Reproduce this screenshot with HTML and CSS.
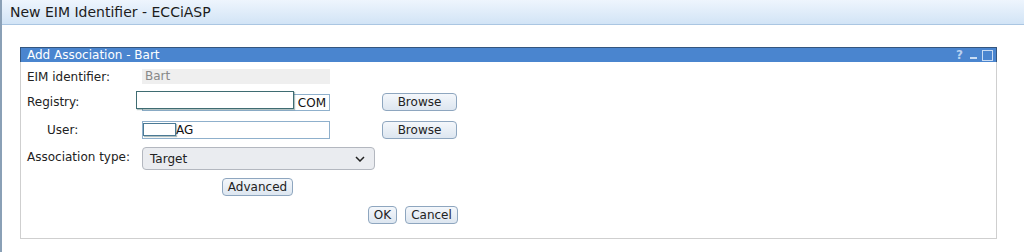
FILE: index.html
```html
<!DOCTYPE html>
<html lang="en">
<head>
  <meta charset="UTF-8" />
  <title>New EIM Identifier - ECCiASP</title>
  <link rel="stylesheet" href="styles.css">
</head>
<body>
  <div class="page">
    <div class="titlebar">New EIM Identifier - ECCiASP</div>

    <div class="dialog">
      <div class="dialog-head">
        <span>Add Association - Bart</span>
        <div class="head-icons">
          <span class="ico-help">?</span>
          <span class="ico-min"></span>
          <span class="ico-max"></span>
        </div>
      </div>

      <div class="dialog-body">
        <div class="row row-eim">
          <label>EIM identifier:</label>
          <div class="readonly">Bart</div>
        </div>

        <div class="row row-registry">
          <label>Registry:</label>
          <div class="field">
            <div class="text-input right">COM</div>
            <div class="mask mask-registry"></div>
          </div>
          <button class="btn browse">Browse</button>
        </div>

        <div class="row row-user">
          <label class="indent">User:</label>
          <div class="field">
            <div class="text-input user-value">AG</div>
            <div class="mask mask-user"></div>
          </div>
          <button class="btn browse">Browse</button>
        </div>

        <div class="row row-type">
          <label>Association type:</label>
          <div class="select">
            <span>Target</span>
            <svg width="10" height="6" viewBox="0 0 10 6"><path d="M1 1l4 4 4-4" fill="none" stroke="#222" stroke-width="1.5"/></svg>
          </div>
        </div>

        <div class="row row-advanced">
          <button class="btn advanced">Advanced</button>
        </div>

        <div class="row row-actions">
          <button class="btn ok">OK</button>
          <button class="btn cancel">Cancel</button>
        </div>
      </div>
    </div>
  </div>
</body>
</html>
```

FILE: styles.css
```css
body {
  margin: 0;
  background: #fff;
  font-family: "DejaVu Sans", Verdana, sans-serif;
  color: #222;
}

.page {
  border-left: 2px solid #8aa0b6;
  height: 252px;
  box-sizing: border-box;
}

.titlebar {
  height: 24px;
  line-height: 24px;
  padding-left: 8px;
  font-size: 14px;
  color: #1c1c1c;
  background: linear-gradient(to bottom, #eef5fd, #d2e4f6);
  border-bottom: 1px solid #aac6e2;
}

.dialog {
  margin: 22px 0 0 18px;
  width: 977px;
}

.dialog-head {
  height: 14px;
  line-height: 14px;
  background: #4a85cf;
  border-top: 1px solid #34567f;
  border-left: 1px solid #34567f;
  border-right: 1px solid #34567f;
  color: #fff;
  font-size: 12px;
  padding-left: 6px;
  display: flex;
  justify-content: space-between;
}

.head-icons {
  display: flex;
  align-items: center;
  gap: 3px;
  padding-right: 3px;
}

.ico-help {
  width: 11px;
  text-align: center;
  font-weight: bold;
  font-size: 12px;
  color: #b9d1ef;
}

.ico-min {
  width: 11px;
  height: 11px;
  position: relative;
}

.ico-min::after {
  content: "";
  position: absolute;
  left: 2px;
  right: 2px;
  bottom: 2px;
  height: 2px;
  background: #c9dcf3;
}

.ico-max {
  width: 9px;
  height: 9px;
  border: 1px solid #c9dcf3;
}

.dialog-body {
  border: 1px solid #cfcfcf;
  border-top: none;
  height: 177px;
  padding: 7px 0 0 6px;
  font-size: 12px;
  box-sizing: border-box;
}

.row {
  display: flex;
  align-items: center;
}

.row label {
  width: 115px;
  flex: none;
}

.row label.indent {
  padding-left: 20px;
  box-sizing: border-box;
}

.readonly {
  width: 188px;
  height: 15px;
  line-height: 15px;
  background: #efefef;
  color: #888;
  padding-left: 3px;
  box-sizing: border-box;
}

.row-registry {
  margin-top: 9px;
}

.row-user {
  margin-top: 10px;
}

.field {
  position: relative;
  width: 188px;
}

.text-input {
  height: 18px;
  line-height: 16px;
  border: 1px solid #8fb0cc;
  box-sizing: border-box;
  padding: 0 3px;
  color: #111;
  font-size: 12px;
}

.text-input.right {
  height: 17px;
  text-align: right;
}

.text-input.user-value {
  padding-left: 33px;
}

.mask {
  position: absolute;
  background: #fff;
  border: 1px solid #3f6c72;
  box-shadow: 1px 1px 1px rgba(60, 100, 100, 0.4);
  box-sizing: border-box;
}

.mask-registry {
  left: -6px;
  top: -3px;
  width: 158px;
  height: 18px;
}

.mask-user {
  left: 1px;
  top: 2px;
  width: 33px;
  height: 13px;
  border-color: #4b7a95;
}

.btn {
  font-family: "DejaVu Sans", Verdana, sans-serif;
  font-size: 12px;
  color: #222;
  height: 18px;
  padding: 0 5px;
  border: 1px solid #8ea6bf;
  border-radius: 4px;
  background: linear-gradient(to bottom, #f4f7fb, #dde6f0);
  line-height: 14px;
}

.browse {
  margin-left: 52px;
  width: 75px;
}

.row-type {
  margin-top: 8px;
  align-items: flex-start;
}

.row-type label {
  padding-top: 3px;
}

.select {
  width: 233px;
  height: 23px;
  border: 1px solid #b3b7bf;
  border-radius: 4px;
  background: #eaecf0;
  box-sizing: border-box;
  display: flex;
  justify-content: space-between;
  align-items: center;
  padding: 0 9px 0 7px;
  font-size: 12px;
}

.row-advanced {
  margin-top: 8px;
  padding-left: 195px;
}

.advanced {
  width: 71px;
  padding: 0;
}

.row-actions {
  margin-top: 10px;
  padding-left: 341px;
  gap: 8px;
}

.ok {
  width: 29px;
  padding: 0;
}

.cancel {
  width: 53px;
  padding: 0;
}
```
